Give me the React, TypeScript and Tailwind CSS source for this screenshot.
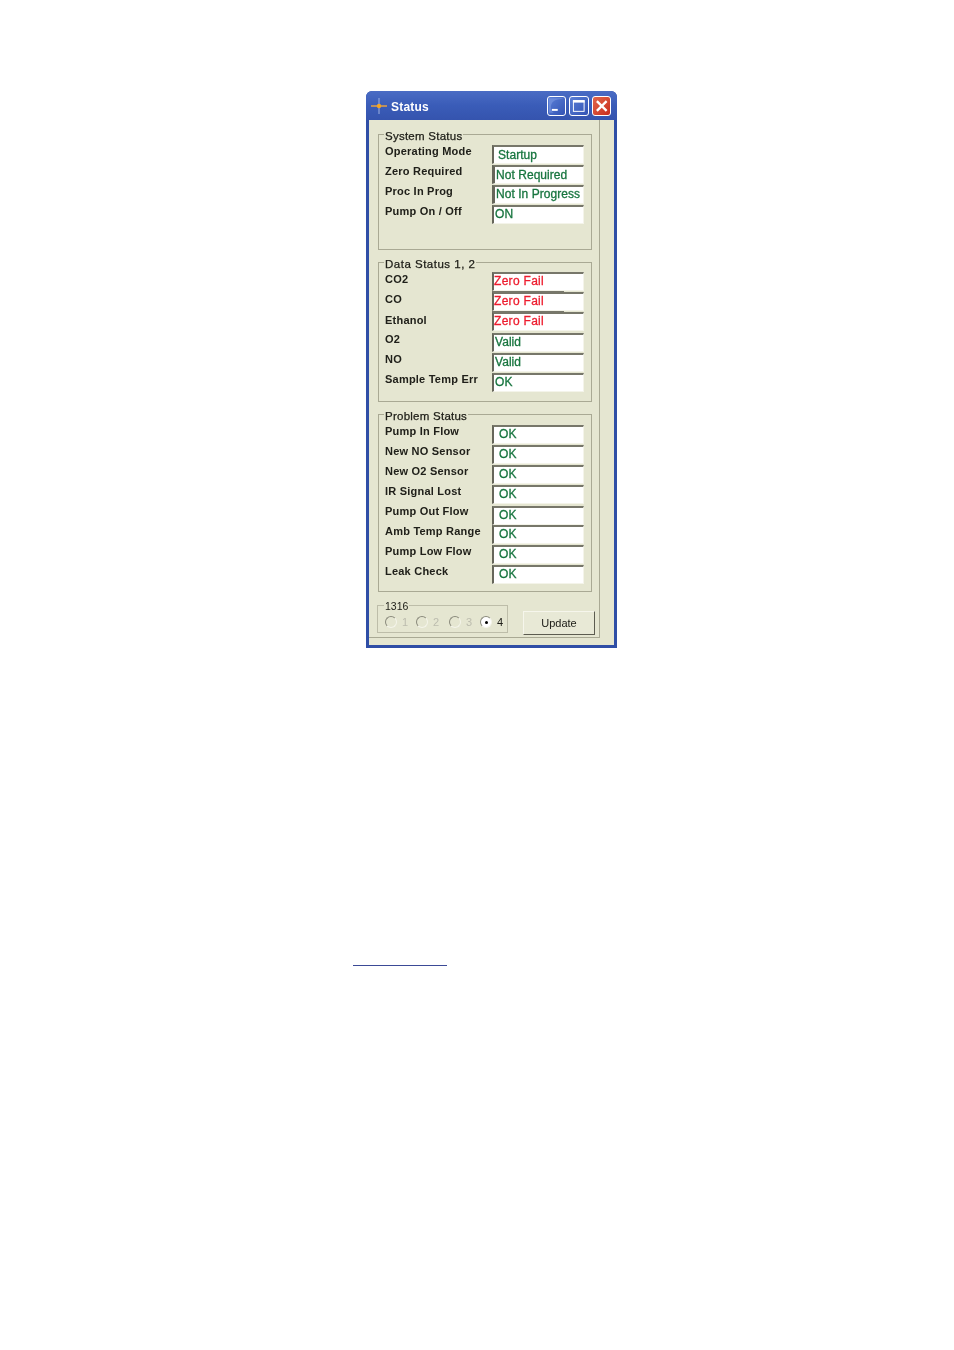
import React from 'react';

type Row = { label: string; value: string; red?: boolean; inset: string; labelTop: string; textTop?: string; gapTop?: string; step?: boolean; thick?: boolean };

const systemRows: Row[] = [
  { label: 'Operating Mode', value: 'Startup', inset: 'pl-[4px]', labelTop: 'mt-0', textTop: 'mt-px' },
  { label: 'Zero Required', value: 'Not Required', inset: 'pl-px', labelTop: 'mt-0', textTop: 'mt-px', thick: true },
  { label: 'Proc In Prog', value: 'Not In Progress', inset: 'pl-px', labelTop: 'mt-0', thick: true },
  { label: 'Pump On / Off', value: 'ON', inset: 'pl-px', labelTop: 'mt-0' },
];

const dataRows: Row[] = [
  { label: 'CO2', value: 'Zero Fail', red: true, inset: 'pl-0', labelTop: 'mt-px' },
  { label: 'CO', value: 'Zero Fail', red: true, inset: 'pl-0', labelTop: 'mt-px', step: true },
  { label: 'Ethanol', value: 'Zero Fail', red: true, inset: 'pl-0', labelTop: 'mt-[2px]', step: true },
  { label: 'O2', value: 'Valid', inset: 'pl-px', labelTop: 'mt-0', gapTop: 'mt-px' },
  { label: 'NO', value: 'Valid', inset: 'pl-px', labelTop: 'mt-0' },
  { label: 'Sample Temp Err', value: 'OK', inset: 'pl-px', labelTop: 'mt-0' },
];

const problemLabels = ['Pump In Flow', 'New NO Sensor', 'New O2 Sensor', 'IR Signal Lost', 'Pump Out Flow', 'Amb Temp Range', 'Pump Low Flow', 'Leak Check'];

const problemRows: Row[] = problemLabels.map((label, i) => ({
  label,
  value: 'OK',
  inset: 'pl-[5px]',
  labelTop: i === 4 ? '-mt-px' : 'mt-0',
  gapTop: i === 4 ? 'mt-px' : i === 5 ? '-mt-px' : undefined,
}));

function StatusRow({ row }: { row: Row }) {
  return (
    <div className={`flex h-5 ${row.gapTop ?? ''}`}>
      <div className={`w-[107px] h-3 leading-3 whitespace-nowrap font-bold text-[11px] tracking-[0.22px] text-[#20201a] ${row.labelTop}`}>
        {row.label}
      </div>
      <div className={`relative w-[92px] h-[19px] bg-white border-t-2 border-r border-b border-t-[#77776a] border-l-[#66665a] border-r-[#f4f4ea] border-b-[#f4f4ea] ${row.thick ? 'border-l-[3px]' : 'border-l-2'} ${row.inset}`}>
        {row.step && <div className="absolute -top-[3px] -left-[2px] w-[72px] h-px bg-[#77776a]" />}
        <span className={`block leading-[15px] whitespace-nowrap text-[12px] [-webkit-text-stroke:0.3px_currentColor] ${row.textTop ?? ''} ${row.red ? 'text-[#ed1c2e] tracking-[0.3px]' : 'text-[#17753f] tracking-[0.05px]'}`}>
          {row.value}
        </span>
      </div>
    </div>
  );
}

function Group({ title, rows, className, titleTracking }: { title: string; rows: Row[]; className?: string; titleTracking: string }) {
  return (
    <div className={`relative w-[214px] border border-[#a9a994] pl-[6px] ${className ?? ''}`}>
      <span className={`absolute left-[5px] -top-[5px] h-3 leading-3 px-px bg-[#e5e6d1] text-[11.5px] [-webkit-text-stroke:0.25px_currentColor] text-[#20201a] whitespace-nowrap ${titleTracking}`}>
        {title}
      </span>
      {rows.map((row) => (
        <StatusRow key={row.label} row={row} />
      ))}
    </div>
  );
}

function Radio({ label, checked, width }: { label: string; checked?: boolean; width: string }) {
  return (
    <div className={`flex items-center ${width}`}>
      <span className={`flex items-center justify-center w-3 h-3 rounded-full border border-t-[#8a8a7c] border-l-[#8a8a7c] border-r-[#f4f4ea] border-b-[#f4f4ea] ${checked ? 'bg-white' : 'bg-[#e5e6d1]'}`}>
        {checked && <span className="w-[3px] h-[3px] rounded-full bg-black" />}
      </span>
      <span className={`ml-[5px] text-[11px] leading-3 ${checked ? 'text-[#20201a]' : 'text-[#bcbcae]'}`}>{label}</span>
    </div>
  );
}

function TitleButton({ kind }: { kind: 'min' | 'max' | 'close' }) {
  const bg = kind === 'close' ? 'bg-gradient-to-br from-[#e2664a] to-[#c92a1c]' : 'bg-gradient-to-br from-[#5b7fd6] to-[#3353b4]';
  return (
    <div className={`w-[19.5px] h-5 rounded-[3px] border border-white flex items-center justify-center ${bg}`}>
      {kind === 'min' && (
        <svg width="18" height="18" viewBox="0 0 18 18">
          <path d="M12 2 C6 2 3 6 3 10 C3 13 4 15 6 16 L1 16 L1 1 L16 1 Z" fill="#7d99e2" opacity="0.6" />
          <rect x="4" y="12" width="6" height="2" fill="#fff" />
        </svg>
      )}
      {kind === 'max' && (
        <svg width="18" height="18" viewBox="0 0 18 18">
          <rect x="3.5" y="3.5" width="11" height="11" fill="none" stroke="#fff" />
          <rect x="3" y="3" width="12" height="2.5" fill="#fff" />
        </svg>
      )}
      {kind === 'close' && (
        <svg width="18" height="18" viewBox="0 0 18 18">
          <path d="M4 4 L14 14 M14 4 L4 14" stroke="#fff" strokeWidth="2.4" />
        </svg>
      )}
    </div>
  );
}

export default function App() {
  return (
    <div className="w-[954px] h-[1350px] bg-white pt-[91px] pl-[353px]" style={{ fontFamily: '"Liberation Sans", Arial, sans-serif' }}>
      <div className="ml-[13px] w-[251px] h-[557px] rounded-t-[6px] bg-[#2f4ea6] pl-[3px] pr-[3px] pb-[3px] flex flex-col blur-[0.3px]">
        <div className="-mx-[3px] h-[29px] shrink-0 rounded-t-[6px] bg-gradient-to-b from-[#4a6cc4] via-[#3a5cb8] to-[#3554ae] flex items-center pl-[4px] pr-[6px] pt-[3px]">
          <svg width="18" height="18" viewBox="0 0 18 18" className="shrink-0 -mt-[2px]">
            <path d="M9 1 V17" stroke="#9fb2e0" strokeWidth="1" />
            <path d="M1 9 H17" stroke="#f2a63a" strokeWidth="1.4" />
            <circle cx="9" cy="9" r="2.2" fill="#f5a623" />
          </svg>
          <span className="ml-[3px] text-[12px] font-bold tracking-[0.2px] text-white">Status</span>
          <div className="ml-auto -mt-[3px] pt-px flex gap-[3px]">
            <TitleButton kind="min" />
            <TitleButton kind="max" />
            <TitleButton kind="close" />
          </div>
        </div>
        <div className="flex-1 bg-[#e5e6d1]">
          <div className="w-[231px] h-[518px] border-r border-b border-[#a9a994] pl-[9px] pt-[14px]">
            <Group title="System Status" rows={systemRows} titleTracking="tracking-[0.25px]" className="h-[116px] pt-[10px]" />
            <Group title="Data Status 1, 2" rows={dataRows} titleTracking="tracking-[0.5px]" className="h-[140px] mt-3 pt-[9px]" />
            <Group title="Problem Status" rows={problemRows} titleTracking="tracking-[0.25px]" className="h-[178px] mt-3 pt-[10px]" />
            <div className="flex mt-[13px] -ml-px">
              <div className="relative w-[131px] h-[28px] border border-[#bdbda9] flex items-center pl-[7px] pt-[6px]">
                <span className="absolute left-[6px] -top-[6px] h-3 leading-3 px-px bg-[#e5e6d1] text-[10.5px] text-[#20201a]">1316</span>
                <Radio label="1" width="w-[31px]" />
                <Radio label="2" width="w-[33px]" />
                <Radio label="3" width="w-[31px]" />
                <Radio label="4" checked width="w-[26px]" />
              </div>
              <div className="ml-[15px] mt-[6px] pt-px w-[72px] h-[24px] flex items-center justify-center border border-t-[#f6f6ec] border-l-[#f6f6ec] border-r-[#5c5c50] border-b-[#5c5c50] bg-[#e8e9d6] text-[11px] text-[#20201a]">
                Update
              </div>
            </div>
          </div>
        </div>
      </div>
      <div className="mt-[317px] w-[94px] h-px bg-[#3b4a96]" />
    </div>
  );
}
